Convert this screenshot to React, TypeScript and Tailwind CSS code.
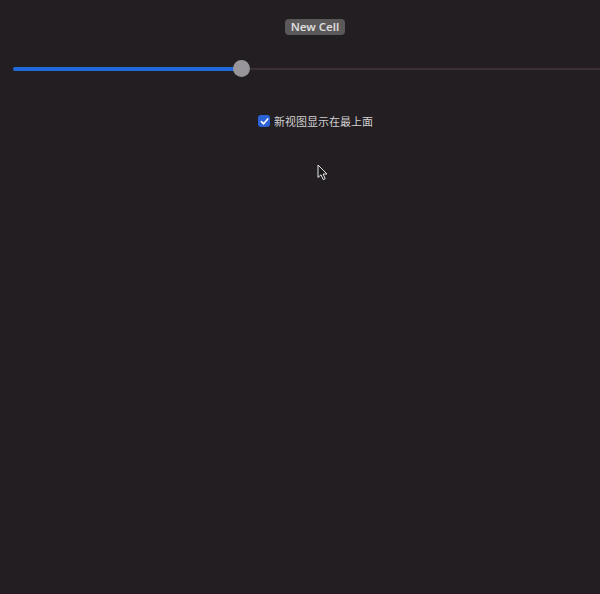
import React from "react";

export default function App() {
  return (
    <div className="w-[600px] h-[594px] bg-[#221e21] overflow-hidden relative" style={{ fontFamily: '"Noto Sans", "Noto Sans CJK SC", sans-serif' }}>
      <div className="w-[630px] flex flex-col items-center pt-[19px]">
        <div className="h-[16px] px-[6px] rounded-[4px] bg-[#5b5859] text-[#dcdcdc] text-[11.5px] font-semibold leading-[16px]">
          New Cell
        </div>
        <div className="w-full flex items-center pl-[13px] mt-[25px] h-[17px]">
          <div className="w-[222px] h-[4px] bg-[#1f6ad8] rounded-l-full" />
          <div className="w-[17px] h-[17px] rounded-full bg-[#98969a] -ml-[2px] shrink-0" />
          <div className="flex-1 h-[2px] bg-[#3d3034]" />
        </div>
        <label className="flex items-center gap-[4px] mt-[37px] ml-[1px]">
          <span className="w-[12px] h-[12px] rounded-[3px] bg-[#2b62d6] flex items-center justify-center">
            <svg width="9" height="9" viewBox="0 0 10 10" fill="none">
              <path d="M1.5 5.2 L4 7.6 L8.6 2.2" stroke="#ffffff" strokeWidth="1.8" strokeLinecap="round" strokeLinejoin="round" />
            </svg>
          </span>
          <span className="text-[11px] leading-[14px] text-[#d2d0d2]" style={{ fontFamily: '"Noto Sans CJK SC", sans-serif' }}>新视图显示在最上面</span>
        </label>
      </div>
      <svg className="absolute left-[317px] top-[164px]" width="12" height="17" viewBox="0 0 12 17">
        <path d="M1 1 L1 13.5 L4 10.8 L6.2 15.6 L8.2 14.7 L6.1 10 L10 10 Z" fill="#1a1a1a" stroke="#e6e6e6" strokeWidth="1" strokeLinejoin="round" />
      </svg>
    </div>
  );
}
